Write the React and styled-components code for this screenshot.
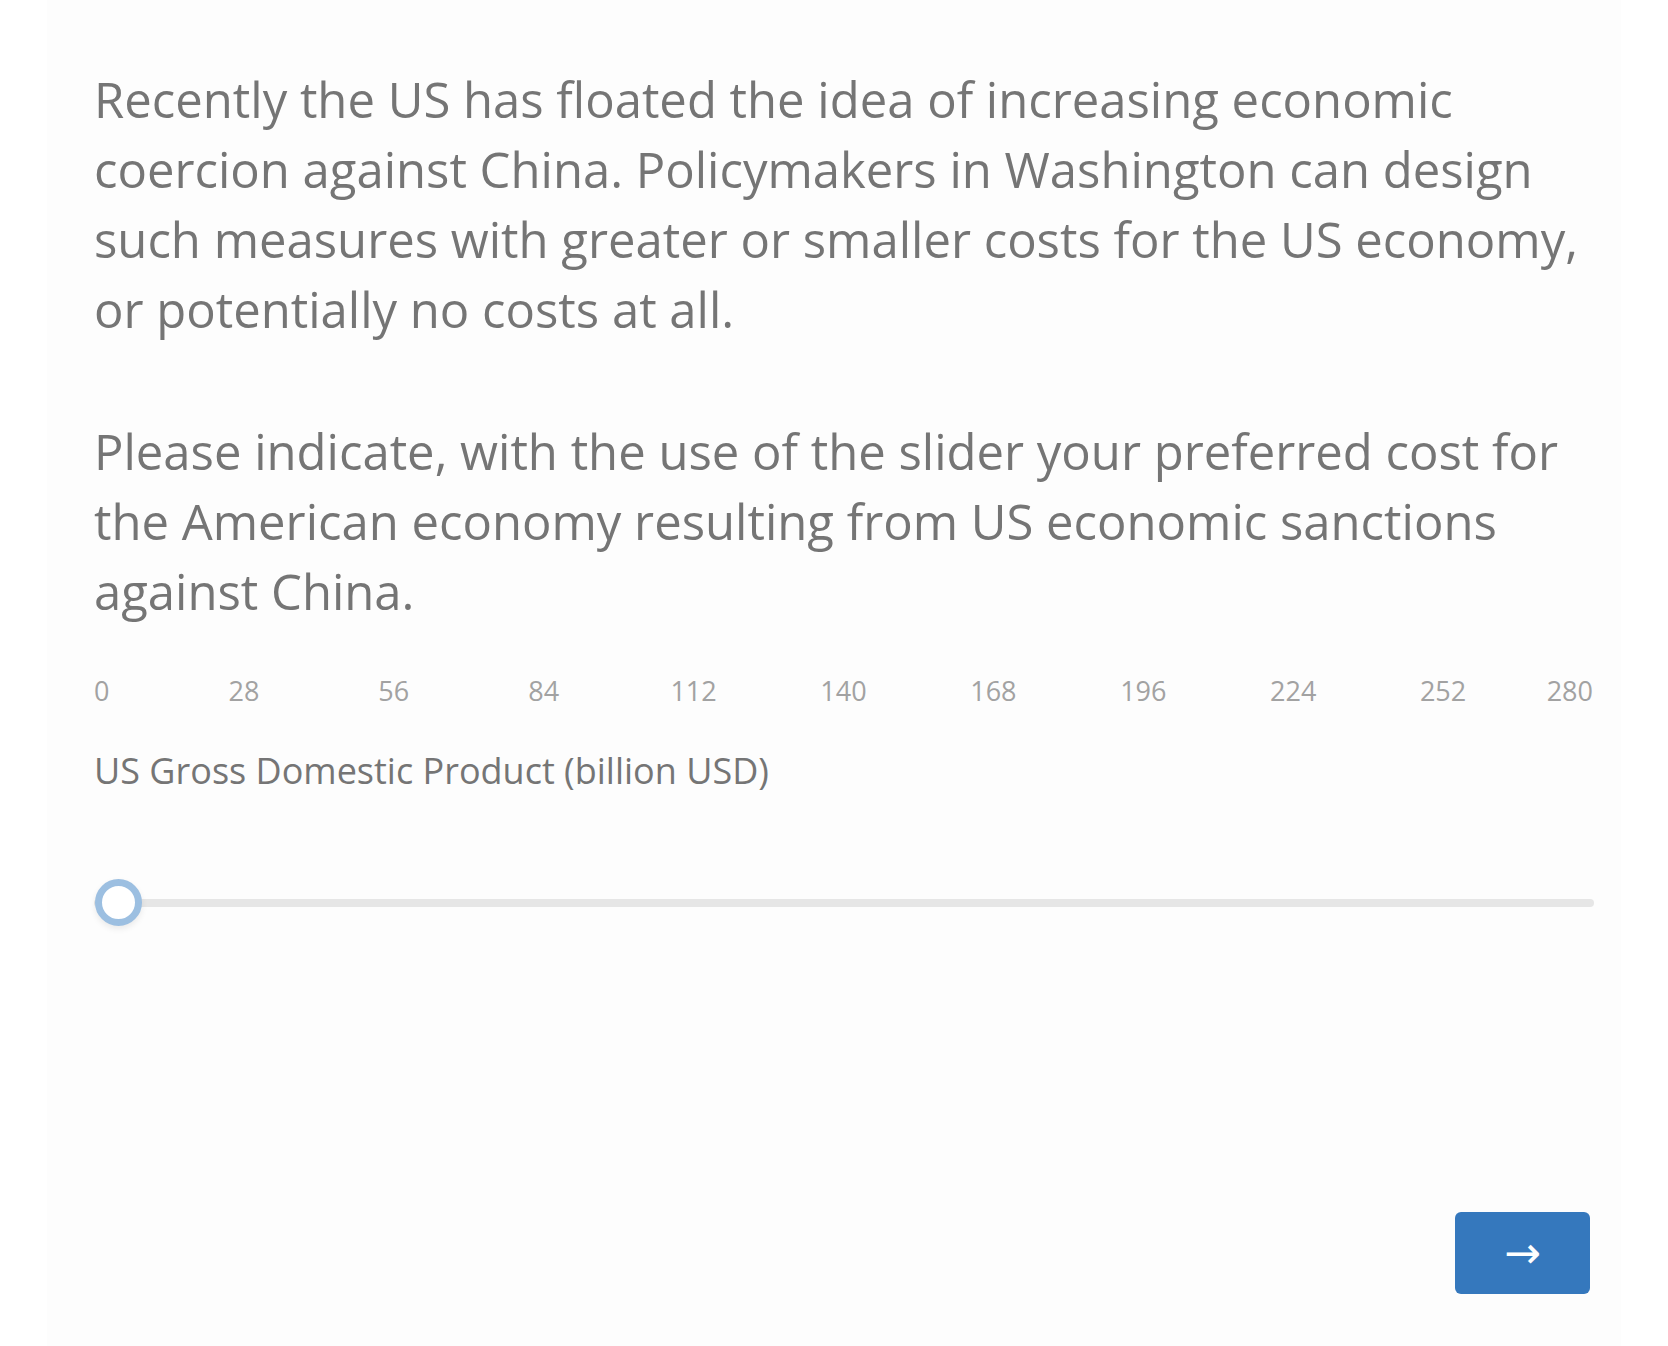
import React from "react";
import styled, { createGlobalStyle } from "styled-components";

const GlobalStyle = createGlobalStyle`
  body {
    margin: 0;
    background: #ffffff;
    font-family: "Open Sans", "Liberation Sans", sans-serif;
  }
`;

const Page = styled.div`
  display: flex;
  min-height: 100vh;
`;

const Panel = styled.div`
  box-sizing: border-box;
  width: 1574px;
  min-height: 100vh;
  margin-left: 47px;
  padding: 64px 21px 0 47px;
  background: #fdfdfd;
`;

const Question = styled.p`
  margin: 0;
  margin-top: ${(p) => (p.$gap ? "72px" : "0")};
  margin-right: -12px;
  font-size: 49px;
  line-height: 70px;
  color: #757575;
`;

const TickRow = styled.div`
  position: relative;
  height: 40px;
  margin-top: 45px;
  margin-right: 7px;
`;

const Tick = styled.span`
  position: absolute;
  top: 0;
  font-size: 27px;
  line-height: 40px;
  color: #a2a2a2;
  white-space: nowrap;
  transform: ${(p) =>
    p.$edge === "start" ? "none" : p.$edge === "end" ? "translateX(-100%)" : "translateX(-50%)"};
`;

const AxisLabel = styled.div`
  margin-top: 36px;
  font-size: 36px;
  line-height: 48px;
  color: #757575;
`;

const Slider = styled.div`
  position: relative;
  display: flex;
  align-items: center;
  height: 47px;
  margin-top: 84px;
`;

const Track = styled.div`
  width: calc(100% - 6px);
  height: 8px;
  border-radius: 4px;
  background: #e6e6e6;
`;

const Thumb = styled.div`
  position: absolute;
  left: 1px;
  top: 0;
  box-sizing: border-box;
  width: 47px;
  height: 47px;
  border: 7px solid #9cbfe1;
  border-radius: 50%;
  background: #ffffff;
  box-shadow: 0 3px 6px rgba(0, 0, 0, 0.08);
`;

const Footer = styled.div`
  display: flex;
  justify-content: flex-end;
  margin-top: 286px;
  padding-right: 10px;
`;

const NextButton = styled.button`
  width: 135px;
  height: 82px;
  border: none;
  border-radius: 6px;
  background: #3578bd;
  color: #ffffff;
  font-family: "DejaVu Sans", sans-serif;
  font-size: 44px;
  line-height: 1;
  cursor: pointer;
`;

const ticks = [0, 28, 56, 84, 112, 140, 168, 196, 224, 252, 280];

export default function App() {
  return (
    <>
      <GlobalStyle />
      <Page>
        <Panel>
          <Question>
            Recently the US has floated the idea of increasing economic coercion against
            China. Policymakers in Washington can design such measures with greater or
            smaller costs for the US economy, or potentially no costs at all.
          </Question>
          <Question $gap>
            Please indicate, with the use of the slider your preferred cost for the
            American economy resulting from US economic sanctions against China.
          </Question>
          <TickRow>
            {ticks.map((t, i) => (
              <Tick
                key={t}
                $edge={i === 0 ? "start" : i === ticks.length - 1 ? "end" : "mid"}
                style={{ left: `${(i / (ticks.length - 1)) * 100}%` }}
              >
                {t}
              </Tick>
            ))}
          </TickRow>
          <AxisLabel>US Gross Domestic Product (billion USD)</AxisLabel>
          <Slider>
            <Track />
            <Thumb />
          </Slider>
          <Footer>
            <NextButton aria-label="Next">→</NextButton>
          </Footer>
        </Panel>
      </Page>
    </>
  );
}
